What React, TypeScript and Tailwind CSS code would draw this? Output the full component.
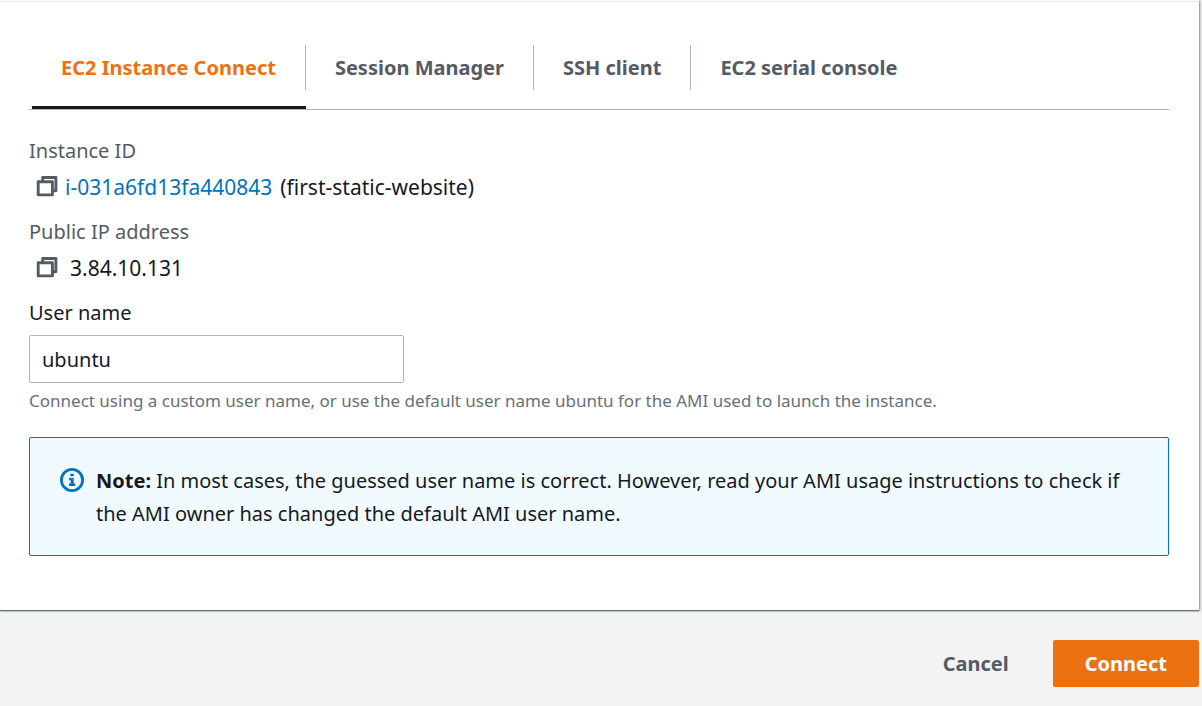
import { useState } from "react";

const tabs = ["EC2 Instance Connect", "Session Manager", "SSH client", "EC2 serial console"];

function CopyIcon() {
  return (
    <svg width="22" height="22" viewBox="0 0 22 22" fill="none" stroke="#545b64" strokeWidth="2.9" strokeLinejoin="round">
      <path d="M2.2 5.7h14.2v13.2H2.2z" />
      <path d="M6.7 5.2V1.5h13.2v13.2h-3.2" />
    </svg>
  );
}

function InfoIcon() {
  return (
    <svg width="24" height="24" viewBox="0 0 24 24" fill="#0073bb">
      <circle cx="12" cy="12" r="10.6" fill="none" stroke="#0073bb" strokeWidth="2.8" />
      <path d="M10.3 5.7h3.4v2.6h-3.4zM9 10h4.7v5.6h1.6v2.3H9v-2.3h1.7v-3.4H9z" />
    </svg>
  );
}

export default function App() {
  const [active, setActive] = useState(0);
  const [user, setUser] = useState("ubuntu");
  return (
    <main className="min-h-screen bg-[#f2f3f3] font-['Noto_Sans',sans-serif] text-[20px] leading-8 text-[#16191f]">
      <section className="mr-[3px] border-t border-[#fafafa] bg-white shadow-[0_1px_1px_#687078,1px_1px_2px_#879596]">
        <div className="border-t border-[#eaeded] pt-[43px] pr-[30px] pb-[54px] pl-[29px]">
          <div role="tablist" className="flex border-b border-[#aab7b8] pl-[3px]">
            {tabs.map((tab, i) => (
              <button
                key={tab}
                role="tab"
                aria-selected={i === active}
                onClick={() => setActive(i)}
                className={i === active ? "border-b-3 border-[#16191f] pb-4 font-bold text-[#ec7211]" : "border-b-3 border-transparent pb-4 font-bold text-[#545b64]"}
              >
                <span className={i < tabs.length - 1 ? "block h-[45px] border-r border-[#aab7b8] px-[29px] leading-[46px]" : "block h-[45px] px-[29px] leading-[46px]"}>{tab}</span>
              </button>
            ))}
          </div>
          <dl className="pt-[25px]">
            <dt className="text-[#545b64]">Instance ID</dt>
            <dd className="mt-1 flex items-center pl-[7px] text-[21px]">
              <button aria-label="Copy instance ID"><CopyIcon /></button>
              <a href="#instance" className="ml-[7px] text-[#0073bb]">i-031a6fd13fa440843</a>
              <span className="ml-2">(first-static-website)</span>
            </dd>
            <dt className="mt-[13px] text-[#545b64]">Public IP address</dt>
            <dd className="mt-1 flex items-center pl-[7px] text-[21px]">
              <button aria-label="Copy public IP address"><CopyIcon /></button>
              <span className="ml-3">3.84.10.131</span>
            </dd>
          </dl>
          <label htmlFor="user" className="mt-[13px] block">User name</label>
          <input id="user" value={user} onChange={(e) => setUser(e.target.value)} className="mt-1.5 block h-12 w-[375px] rounded-xs border border-[#aab7b8] bg-white px-3" />
          <p className="mt-1 text-[17px] leading-7 text-[#687078]">Connect using a custom user name, or use the default user name ubuntu for the AMI used to launch the instance.</p>
          <div className="mt-[22px] flex items-start gap-3 rounded-xs border border-[#0073bb] bg-[#f1faff] px-[30px] pt-[26px] pb-[25px] leading-[33px]">
            <span className="mt-1 shrink-0"><InfoIcon /></span>
            <p><strong>Note:</strong> In most cases, the guessed user name is correct. However, read your AMI usage instructions to check if the AMI owner has changed the default AMI user name.</p>
          </div>
        </div>
      </section>
      <footer className="flex justify-end gap-3 pt-[30px] pr-[3px] pb-[19px]">
        <button className="h-[47px] px-8 font-bold text-[#545b64]">Cancel</button>
        <button className="h-[47px] rounded-xs bg-[#ec7211] px-8 font-bold text-white">Connect</button>
      </footer>
    </main>
  );
}
